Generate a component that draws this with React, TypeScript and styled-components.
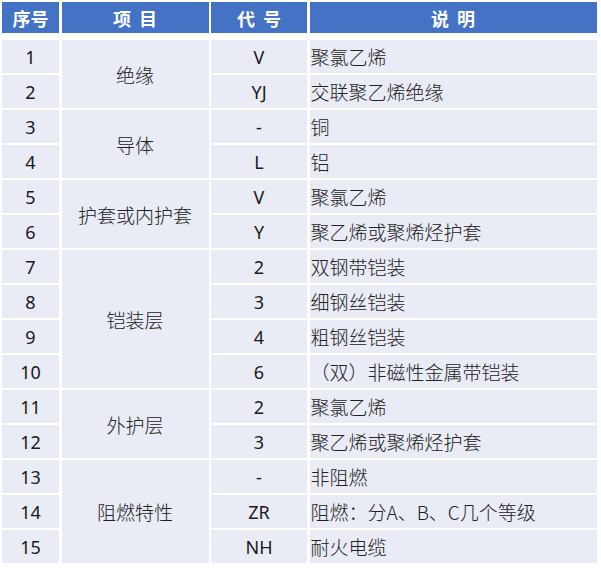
import React from 'react';
import styled, { createGlobalStyle } from 'styled-components';

const GlobalStyle = createGlobalStyle`
  html, body {
    margin: 0;
    background: #ffffff;
  }
`;

const groups: { name: string; rows: [string, string][] }[] = [
  { name: '绝缘', rows: [['V', '聚氯乙烯'], ['YJ', '交联聚乙烯绝缘']] },
  { name: '导体', rows: [['-', '铜'], ['L', '铝']] },
  { name: '护套或内护套', rows: [['V', '聚氯乙烯'], ['Y', '聚乙烯或聚烯烃护套']] },
  {
    name: '铠装层',
    rows: [
      ['2', '双钢带铠装'],
      ['3', '细钢丝铠装'],
      ['4', '粗钢丝铠装'],
      ['6', '（双）非磁性金属带铠装'],
    ],
  },
  { name: '外护层', rows: [['2', '聚氯乙烯'], ['3', '聚乙烯或聚烯烃护套']] },
  { name: '阻燃特性', rows: [['-', '非阻燃'], ['ZR', '阻燃：分A、B、C几个等级'], ['NH', '耐火电缆']] },
];

const Page = styled.div`
  padding: 2px 0 0 2px;
  font-family: 'Noto Sans', 'Noto Sans CJK SC', sans-serif;
`;

const Grid = styled.div`
  display: grid;
  grid-template-columns: 57px 147px 96px 287px;
  column-gap: 2.5px;
  row-gap: 2px;
  width: 594px;
`;

const Header = styled(Grid)`
  grid-template-rows: 31px;
  margin-bottom: 7px;
`;

const Body = styled(Grid)`
  grid-template-rows: repeat(15, 33px);
  color: #1a1a1a;
`;

const HeadCell = styled.div<{ $spaced?: boolean }>`
  background: #4472c4;
  color: #ffffff;
  font-family: 'Noto Sans CJK SC', sans-serif;
  font-weight: 700;
  font-size: 18px;
  letter-spacing: ${p => (p.$spaced ? '8px' : '0')};
  text-indent: ${p => (p.$spaced ? '8px' : '0')};
  display: flex;
  align-items: center;
  justify-content: center;
`;

const Cell = styled.div<{ $left?: boolean }>`
  background: #e9ebf5;
  display: flex;
  align-items: center;
  justify-content: ${p => (p.$left ? 'flex-start' : 'center')};
  padding-left: ${p => (p.$left ? '1px' : '0')};
  font-size: 18px;
`;

const CjkCell = styled(Cell)`
  font-family: 'Noto Sans CJK SC', sans-serif;
  font-weight: 300;
  font-size: 19px;
  color: #222;
`;

export default function App() {
  let n = 0;
  return (
    <Page>
      <GlobalStyle />
      <Header>
        <HeadCell>序号</HeadCell>
        <HeadCell $spaced>项目</HeadCell>
        <HeadCell $spaced>代号</HeadCell>
        <HeadCell $spaced>说明</HeadCell>
      </Header>
      <Body>
        {groups.map(g =>
          g.rows.map(([code, desc], i) => {
            n += 1;
            return (
              <React.Fragment key={n}>
                <Cell style={{ gridRow: n, gridColumn: 1 }}>{n}</Cell>
                {i === 0 && (
                  <CjkCell style={{ gridRow: `${n} / span ${g.rows.length}`, gridColumn: 2 }}>{g.name}</CjkCell>
                )}
                <Cell style={{ gridRow: n, gridColumn: 3 }}>{code}</Cell>
                <CjkCell $left style={{ gridRow: n, gridColumn: 4 }}>
                  {desc}
                </CjkCell>
              </React.Fragment>
            );
          }),
        )}
      </Body>
    </Page>
  );
}
